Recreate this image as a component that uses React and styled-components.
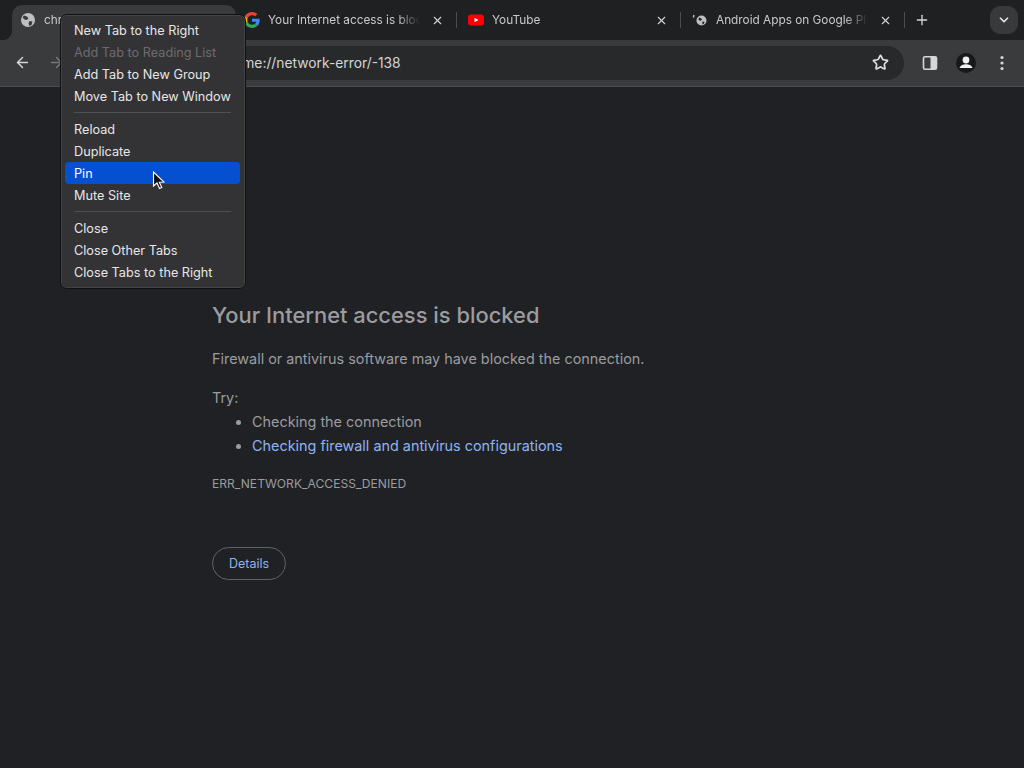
import React from "react";
import styled, { createGlobalStyle } from "styled-components";
import { X, Plus, ChevronDown, ArrowLeft, ArrowRight, Star } from "lucide-react";

const font = `Inter, "Liberation Sans", sans-serif`;
const chrome = "#3a3b3d";

const GlobalStyle = createGlobalStyle`
  html, body { margin: 0; height: 100%; background: #202124; }
  #root { height: 100%; }
  * { box-sizing: border-box; }
`;

const Page = styled.div`
  position: relative;
  width: 1024px;
  height: 768px;
  overflow: hidden;
  display: flex;
  flex-direction: column;
  font-family: ${font};
  background: #202124;
`;

const TabStrip = styled.div`
  height: 40px;
  flex: none;
  display: flex;
  align-items: flex-end;
  padding-left: 12px;
  background: #1f2022;
`;

const Tab = styled.div`
  width: 224px;
  height: 35px;
  flex: none;
  display: flex;
  align-items: center;
  padding: 0 13px 5px 8px;
  gap: 8px;
  position: relative;
  border-radius: 10px 10px 0 0;
  background: ${(p) => (p.$active ? chrome : "transparent")};
  color: #c8cacd;
  font-size: 11.8px;
  &::before {
    content: "";
    display: ${(p) => (p.$active ? "block" : "none")};
    position: absolute;
    left: -10px;
    bottom: 0;
    width: 10px;
    height: 10px;
    background: radial-gradient(circle at 0 0, transparent 10px, ${chrome} 10.5px);
  }
  &::after {
    content: "";
    display: ${(p) => (p.$sep ? "block" : "none")};
    position: absolute;
    right: 3px;
    top: 7px;
    height: 16px;
    width: 1px;
    background: #4a4b4f;
  }
`;

const TabTitle = styled.span`
  flex: 1;
  min-width: 0;
  margin-right: 3px;
  white-space: nowrap;
  overflow: hidden;
  -webkit-mask-image: linear-gradient(to right, #000 85%, transparent 100%);
  mask-image: linear-gradient(to right, #000 85%, transparent 100%);
`;

const Favicon = styled.svg`
  width: 16px;
  height: 16px;
  flex: none;
`;

const TabClose = styled(X)`
  width: 13px;
  height: 13px;
  flex: none;
  color: #d5d6d8;
  margin-right: 3px;
`;

const NewTab = styled(Plus)`
  width: 16px;
  height: 16px;
  color: #d5d6d8;
  margin: 0 0 12px 6px;
  flex: none;
`;

const TabSearch = styled.div`
  width: 28px;
  height: 28px;
  margin: 0 6px 6px auto;
  border-radius: 10px;
  background: #38393b;
  color: #e2e3e5;
  display: flex;
  align-items: center;
  justify-content: center;
  flex: none;
`;

const Toolbar = styled.div`
  height: 47px;
  flex: none;
  display: flex;
  align-items: center;
  padding: 0 12px 1px 12px;
  background: ${chrome};
  border-bottom: 1px solid #4a4b4d;
`;

const NavIcon = styled.div`
  width: 20px;
  height: 20px;
  display: flex;
  align-items: center;
  justify-content: center;
  margin-right: 14px;
  color: ${(p) => (p.$dim ? "#77787b" : "#d6d7d9")};
  flex: none;
`;

const Omnibox = styled.div`
  width: 786px;
  height: 34px;
  margin-left: 38px;
  border-radius: 17px;
  background: #28292b;
  display: flex;
  align-items: center;
  padding: 0 15px 0 95px;
  color: #d4d5d7;
  font-size: 13.8px;
  flex: none;
`;

const Url = styled.span`
  flex: 1;
`;

const ToolIcons = styled.div`
  display: flex;
  align-items: center;
  margin-left: 16px;
  gap: 16px;
`;

const ToolSvg = styled.svg`
  width: 20px;
  height: 20px;
  flex: none;
`;

const Content = styled.main`
  flex: 1;
  padding: 213px 0 0 212px;
`;

const Title = styled.h1`
  margin: 0;
  font-size: 21.9px;
  line-height: 30px;
  font-weight: 500;
  color: #9a9c9f;
`;

const Message = styled.p`
  margin: 17px 0 0;
  font-size: 14.4px;
  line-height: 24px;
  color: #9a9c9f;
`;

const Suggestions = styled.ul`
  margin: 0;
  padding: 0 0 0 40px;
  font-size: 14.4px;
  line-height: 24px;
  color: #9a9c9f;
`;

const TryLabel = styled(Message)`
  margin-top: 15px;
`;

const HelpLink = styled.span`
  color: #8fb3f2;
`;

const ErrorCode = styled.div`
  margin-top: 18px;
  font-size: 12.1px;
  line-height: 16px;
  color: #9a9c9f;
`;

const DetailsButton = styled.button`
  display: block;
  margin-top: 55px;
  width: 74px;
  height: 33px;
  padding: 0;
  border-radius: 17px;
  border: 1px solid #5f6368;
  background: transparent;
  color: #8fb3f2;
  font: 400 12.5px ${font};
`;

const Menu = styled.div`
  position: absolute;
  left: 60px;
  top: 14px;
  width: 186px;
  height: 275px;
  padding: 4px 5px 4px 4px;
  border-radius: 7px;
  background: #333335;
  border: 1px solid #111;
  box-shadow: 0 0 0 0.5px #555 inset;
  font-size: 12.7px;
`;

const MenuItem = styled.div`
  height: 22px;
  padding-left: 9px;
  display: flex;
  align-items: center;
  border-radius: 4px;
  white-space: nowrap;
  color: ${(p) => (p.$disabled ? "#6c6c6e" : p.$selected ? "#fff" : "#e6e6e7")};
  background: ${(p) => (p.$selected ? "#0550d0" : "transparent")};
`;

const MenuSeparator = styled.hr`
  margin: 5px 9px;
  height: 1px;
  border: 0;
  background: #505052;
`;

const Cursor = styled.svg`
  position: absolute;
  left: 152px;
  top: 171px;
  width: 13px;
  height: 19px;
`;

const Globe = ({ bg = chrome }) => (
  <Favicon viewBox="0 0 16 16">
    <circle cx="8" cy="8" r="7" fill="#bdbfc2" />
    <path d="M4 3.500l3 1 1.500 2-2 1.500-2-.5-2-2zM9.500 9l3 .5-1 3.500-2 1-1-2.500z" fill={bg} />
  </Favicon>
);

// loading favicon: small globe with the tick of the spinner next to it
const LoadingGlobe = () => (
  <Favicon viewBox="0 0 16 16">
    <path d="M2 3l-.6 2.500" stroke="#bdbfc2" strokeWidth="1.400" fill="none" />
    <circle cx="9.500" cy="8.500" r="5" fill="#bdbfc2" />
    <path d="M7 5.500l2 .8 1 1.500-1.500 1-2-.8zM10.500 9.500l2 .3-.7 2-1.500.7z" fill="#1f2022" />
  </Favicon>
);

const GoogleLogo = () => (
  <Favicon viewBox="0 0 48 48">
    <path fill="#EA4335" d="M24 9.500c3.500 0 6.700 1.200 9.200 3.600l6.900-6.900C35.900 2.400 30.500 0 24 0 14.600 0 6.500 5.400 2.600 13.200l8 6.200C12.500 13.700 17.800 9.500 24 9.500z" />
    <path fill="#4285F4" d="M47 24.500c0-1.600-.2-3.100-.4-4.500H24v9h12.900c-.6 3-2.200 5.500-4.700 7.200l7.700 6c4.500-4.200 7.100-10.300 7.100-17.700z" />
    <path fill="#FBBC05" d="M10.500 28.600c-.5-1.400-.8-3-.8-4.600s.3-3.200.8-4.600l-8-6.200C.9 16.400 0 20.100 0 24s.9 7.600 2.600 10.800l7.900-6.200z" />
    <path fill="#34A853" d="M24 48c6.500 0 11.900-2.100 15.900-5.800l-7.700-6c-2.200 1.400-4.900 2.300-8.200 2.300-6.200 0-11.500-4.200-13.400-9.900l-8 6.200C6.500 42.600 14.600 48 24 48z" />
  </Favicon>
);

const YouTubeLogo = () => (
  <Favicon viewBox="0 0 16 16">
    <rect x="0" y="2.500" width="16" height="11" rx="3" fill="#f00" />
    <path d="M6.500 5.700L10.500 8l-4 2.300z" fill="#fff" />
  </Favicon>
);

const PanelIcon = () => (
  <ToolSvg viewBox="0 0 20 20">
    <rect x="3.500" y="3.800" width="13" height="12.400" rx="1.500" fill="none" stroke="#d6d7d9" strokeWidth="1.600" />
    <rect x="10.500" y="4" width="6" height="12" fill="#d6d7d9" />
  </ToolSvg>
);

const ProfileIcon = () => (
  <ToolSvg viewBox="0 0 20 20">
    <circle cx="10" cy="10" r="10" fill="#17181a" />
    <circle cx="10" cy="7" r="3.400" fill="#f0f0f0" />
    <path d="M3.500 15c1-3 3.800-3.800 6.500-3.800s5.500.8 6.500 3.800z" fill="#f0f0f0" />
  </ToolSvg>
);

const MoreIcon = () => (
  <ToolSvg viewBox="0 0 20 20">
    <circle cx="10" cy="4.500" r="1.600" fill="#d6d7d9" />
    <circle cx="10" cy="10" r="1.600" fill="#d6d7d9" />
    <circle cx="10" cy="15.500" r="1.600" fill="#d6d7d9" />
  </ToolSvg>
);

const menuGroups = [
  [
    { label: "New Tab to the Right" },
    { label: "Add Tab to Reading List", disabled: true },
    { label: "Add Tab to New Group" },
    { label: "Move Tab to New Window" },
  ],
  [
    { label: "Reload" },
    { label: "Duplicate" },
    { label: "Pin", selected: true },
    { label: "Mute Site" },
  ],
  [
    { label: "Close" },
    { label: "Close Other Tabs" },
    { label: "Close Tabs to the Right" },
  ],
];

export default function App() {
  return (
    <Page>
      <GlobalStyle />
      <TabStrip>
        <Tab $active>
          <Globe />
          <TabTitle>chrome://network-error/-138</TabTitle>
          <TabClose />
        </Tab>
        <Tab $sep>
          <GoogleLogo />
          <TabTitle>Your Internet access is blocked</TabTitle>
          <TabClose />
        </Tab>
        <Tab $sep>
          <YouTubeLogo />
          <TabTitle>YouTube</TabTitle>
          <TabClose />
        </Tab>
        <Tab $sep>
          <LoadingGlobe />
          <TabTitle>Android Apps on Google Play</TabTitle>
          <TabClose />
        </Tab>
        <NewTab />
        <TabSearch>
          <ChevronDown size={14} strokeWidth={3} />
        </TabSearch>
      </TabStrip>
      <Toolbar>
        <NavIcon>
          <ArrowLeft size={17} strokeWidth={2} />
        </NavIcon>
        <NavIcon $dim>
          <ArrowRight size={17} strokeWidth={2} />
        </NavIcon>
        <Omnibox>
          <Url>chrome://network-error/-138</Url>
          <Star size={17} strokeWidth={2.400} color="#e0e1e3" />
        </Omnibox>
        <ToolIcons>
          <PanelIcon />
          <ProfileIcon />
          <MoreIcon />
        </ToolIcons>
      </Toolbar>
      <Content>
        <Title>Your Internet access is blocked</Title>
        <Message>Firewall or antivirus software may have blocked the connection.</Message>
        <TryLabel>Try:</TryLabel>
        <Suggestions>
          <li>Checking the connection</li>
          <li>
            <HelpLink>Checking firewall and antivirus configurations</HelpLink>
          </li>
        </Suggestions>
        <ErrorCode>ERR_NETWORK_ACCESS_DENIED</ErrorCode>
        <DetailsButton>Details</DetailsButton>
      </Content>
      <Menu>
        {menuGroups.map((group, i) => (
          <React.Fragment key={i}>
            {i > 0 && <MenuSeparator />}
            {group.map((item) => (
              <MenuItem key={item.label} $disabled={item.disabled} $selected={item.selected}>
                {item.label}
              </MenuItem>
            ))}
          </React.Fragment>
        ))}
      </Menu>
      <Cursor viewBox="0 0 13 19">
        <path d="M1.500 1v14l3.500-3 2.500 5.500 2.300-1-2.500-5.300 4.700-.2z" fill="#111" stroke="#fff" strokeWidth="1.100" />
      </Cursor>
    </Page>
  );
}
